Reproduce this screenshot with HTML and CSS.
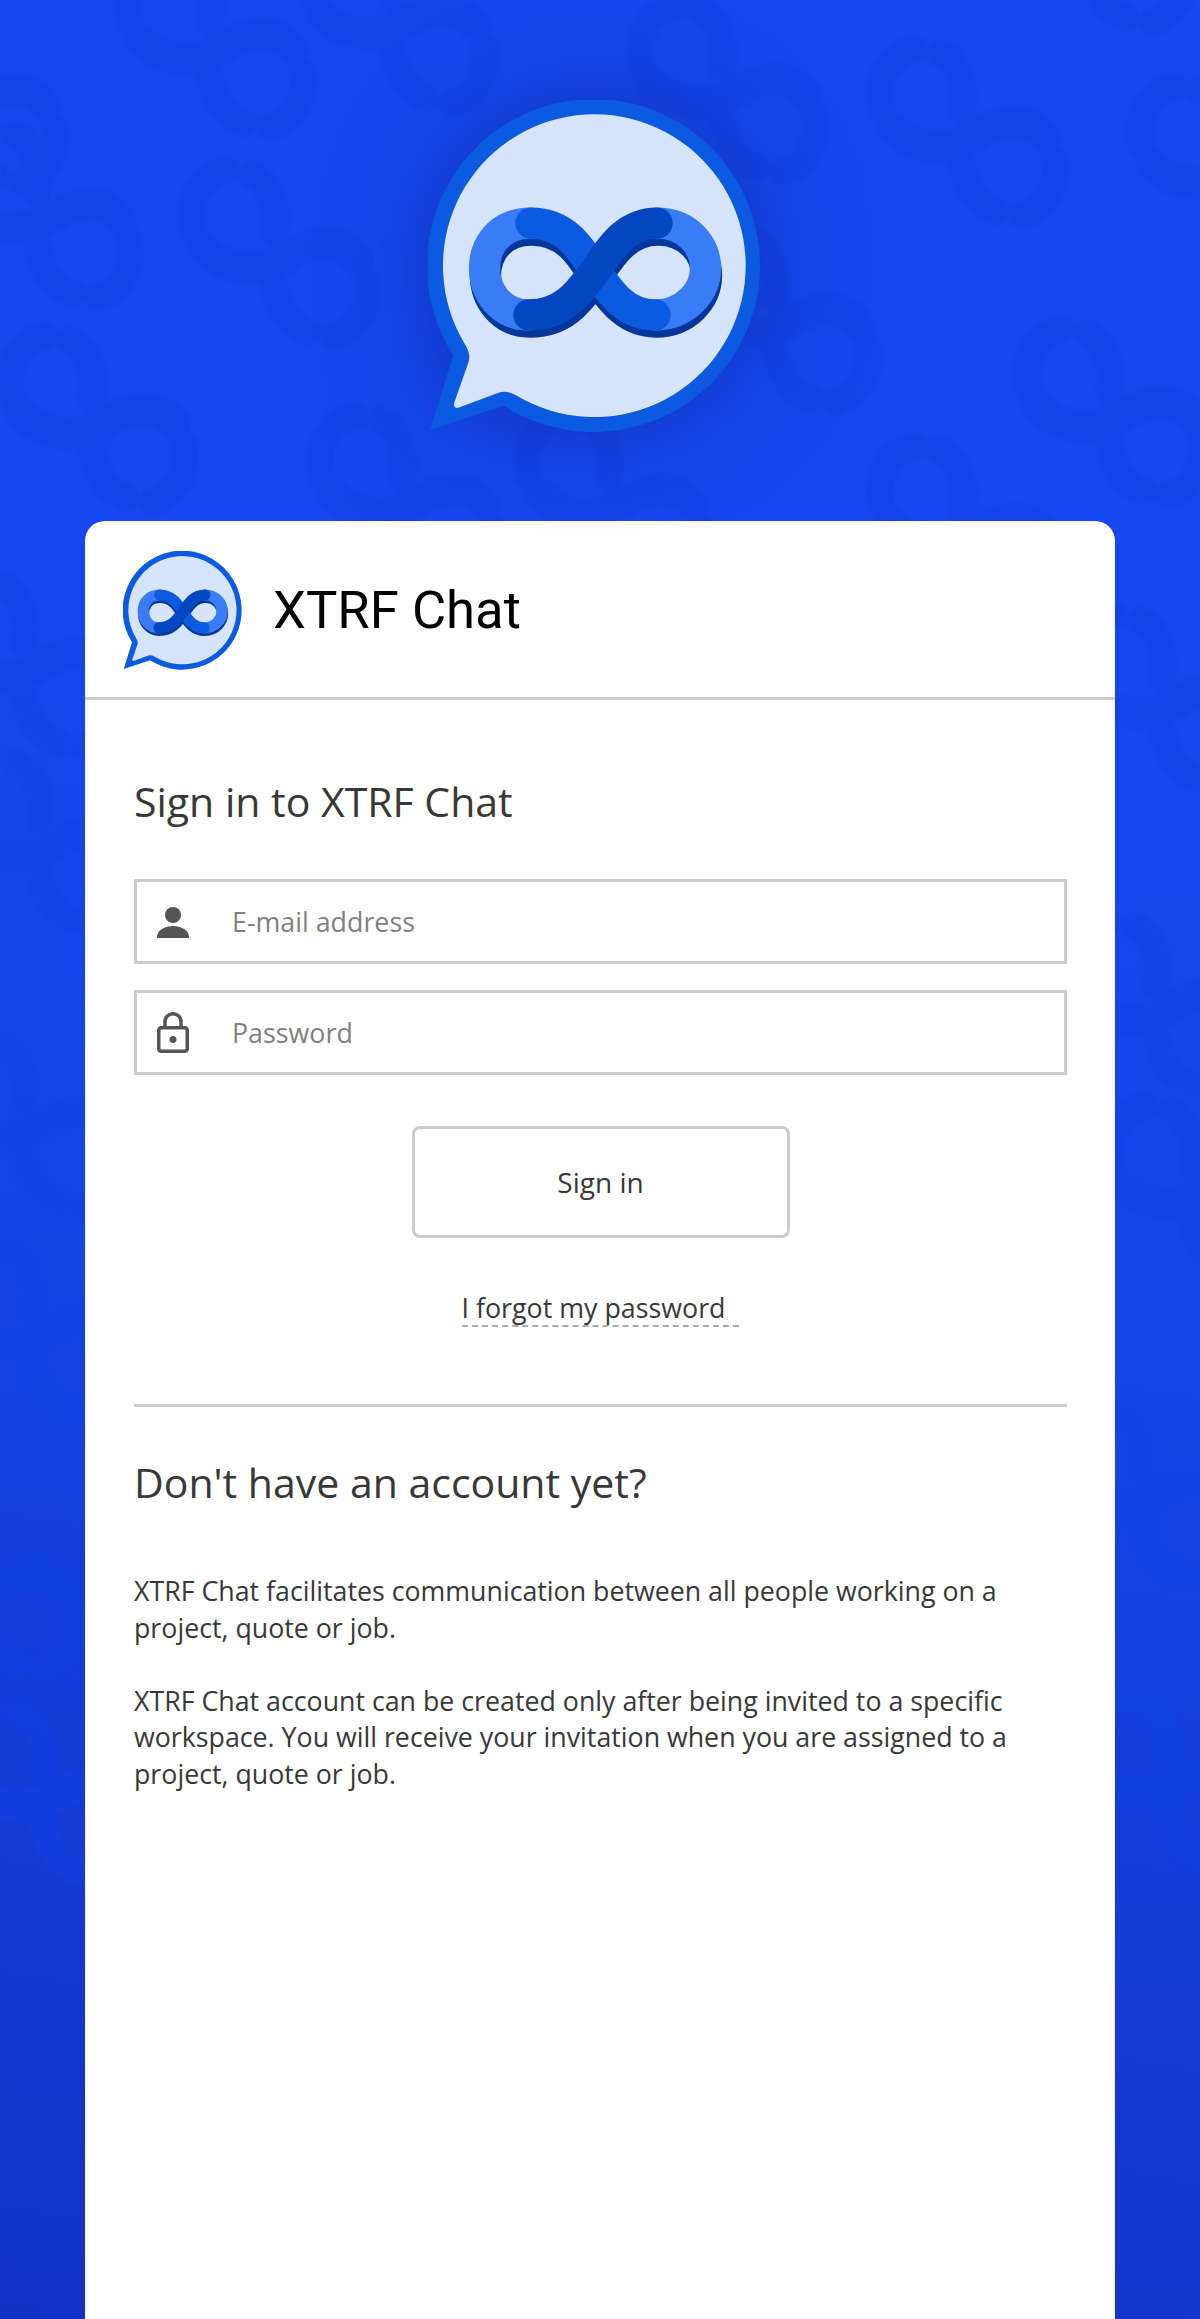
FILE: index.html
```html
<!DOCTYPE html>
<html lang="en">
<head>
    <meta charset="UTF-8">
    <meta name="viewport" content="width=device-width, initial-scale=1.0">
    <title>XTRF Chat</title>
    <link rel="stylesheet" href="styles.css">
</head>
<body>
<svg class="bg-pattern" viewBox="0 0 1200 2319" aria-hidden="true">
    <defs>
        <g id="bgMark" fill="none" stroke-linecap="round" stroke-width="27">
            <path d="M-78 -24 C-86 -50 -72 -78 -46 -84"/>
            <path d="M-20 -80 C-2 -70 8 -45 2 -22"/>
            <path d="M-68 -6 C-45 20 -5 17 20 0 C45 -15 70 -16 85 5" stroke-width="32"/>
            <path d="M2 32 C8 58 20 72 36 78"/>
            <path d="M62 82 C84 78 100 52 94 26"/>
        </g>
    </defs>
    <g stroke="#1241e4">
        <use href="#bgMark" x="208" y="45"/>
        <use href="#bgMark" x="35" y="215"/>
        <use href="#bgMark" x="272" y="254"/>
        <use href="#bgMark" x="90" y="420"/>
        <use href="#bgMark" x="400" y="500"/>
        <use href="#bgMark" x="607" y="500"/>
        <use href="#bgMark" x="390" y="20"/>
        <use href="#bgMark" x="720" y="90"/>
        <use href="#bgMark" x="-40" y="100"/>
        <use href="#bgMark" x="960" y="133"/>
        <use href="#bgMark" x="773" y="320"/>
        <use href="#bgMark" x="1107" y="413"/>
        <use href="#bgMark" x="1220" y="170"/>
        <use href="#bgMark" x="1090" y="-60"/>
        <use href="#bgMark" x="960" y="530"/>
        <use href="#bgMark" x="22" y="665"/>
        <use href="#bgMark" x="37" y="843"/>
        <use href="#bgMark" x="22" y="1124"/>
        <use href="#bgMark" x="30" y="1330"/>
        <use href="#bgMark" x="-20" y="1586"/>
        <use href="#bgMark" x="41" y="1793"/>
        <use href="#bgMark" x="1160" y="700"/>
        <use href="#bgMark" x="1154" y="1006"/>
        <use href="#bgMark" x="1190" y="1190"/>
        <use href="#bgMark" x="1140" y="1494"/>
        <use href="#bgMark" x="1166" y="1781"/>
    </g>
</svg>

<div class="page">
    <div class="hero">
        <svg class="logo logo-big" viewBox="0 0 330 330" aria-hidden="true">
            <defs>
                <g id="chatLogo">
                    <path fill="#0c5ae0" d="M2 327 L25 253 A165 165 0 1 1 75 303 Z"/>
                    <path fill="#d6e4fb" d="M36 241 Q44 253 39 263 L26 300 Q25 306 30 305 L70 290 Q78 287 88 293 A150 150 0 1 0 36 241 Z"/>
                    <g fill="none" stroke-width="31" stroke-linecap="round">
                        <path stroke="#03389a" transform="translate(1 7)" d="M165 170 C150 190 135 213 100 213 C72 213 56 190 56 167 C56 145 70 122 102 122 C135 122 150 145 165 170 C180 190 195 213 225 213 C255 213 275 190 275 167 C275 145 258 122 227 122 C195 122 180 148 165 170 Z"/>
                        <path stroke="#3a7cf5" d="M102 122 C70 122 56 145 56 167 C56 190 72 213 100 213"/>
                        <path stroke="#3a7cf5" d="M227 122 C258 122 275 145 275 167 C275 190 255 213 225 213"/>
                        <path stroke="#0c5ae0" d="M102 122 C135 122 150 145 165 168 C180 190 195 213 225 213"/>
                        <path stroke="#0547c0" d="M100 213 C135 213 150 190 165 170 C180 148 195 122 227 122"/>
                    </g>
                </g>
            </defs>
            <use href="#chatLogo"/>
        </svg>
    </div>

    <div class="card">
        <div class="card-header">
            <svg class="logo logo-small" viewBox="0 0 330 330" aria-hidden="true"><use href="#chatLogo"/></svg>
            <span class="app-name">XTRF Chat</span>
        </div>

        <div class="card-body">
            <h2 class="signin-title">Sign in to XTRF Chat</h2>

            <div class="field">
                <svg class="field-icon" viewBox="0 0 32 41" aria-hidden="true">
                    <circle cx="16" cy="14" r="8"/>
                    <path d="M0 36 C0 29 8 25 16 25 C24 25 32 29 32 36 V37 H0 Z"/>
                </svg>
                <input type="text" placeholder="E-mail address">
            </div>
            <div class="field">
                <svg class="field-icon" viewBox="0 0 32 41" aria-hidden="true">
                    <rect x="1.75" y="15.75" width="28.5" height="23.5" rx="2.5" fill="none" stroke="#555" stroke-width="3.5"/>
                    <path d="M8 15 V9.5 A8 7.75 0 0 1 24 9.5 V15" fill="none" stroke="#555" stroke-width="3.5"/>
                    <circle cx="16" cy="27.5" r="3.5"/>
                </svg>
                <input type="password" placeholder="Password">
            </div>

            <div class="actions">
                <button type="button">Sign in</button>
                <a class="forgot" href="#">I forgot my password</a>
            </div>

            <div class="register">
                <h2 class="register-title">Don't have an account yet?</h2>
                <p>XTRF Chat facilitates communication between all people working on a project, quote or job.</p>
                <p>XTRF Chat account can be created only after being invited to a specific workspace. You will receive your invitation when you are assigned to a project, quote or job.</p>
            </div>
        </div>
    </div>
</div>
</body>
</html>
```

FILE: styles.css
```css
* {
    box-sizing: border-box;
    margin: 0;
    padding: 0;
}

html, body {
    height: 2319px;
    overflow: hidden;
}

body {
    position: relative;
    font-family: "Open Sans", sans-serif;
    color: #383838;
    background: linear-gradient(190deg, #1747ee 0%, #1747ee 35%, #1541e0 65%, #1232c6 100%);
}

.bg-pattern {
    position: absolute;
    top: 0;
    left: 0;
    width: 1200px;
    height: 2319px;
    opacity: 0.55;
    filter: blur(1.5px);
}

.page {
    position: relative;
    height: 100%;
    display: flex;
    flex-direction: column;
}

.hero {
    height: 521px;
    padding: 100px 0 0 428px;
}

.logo {
    display: block;
}

.logo-big {
    width: 333px;
    height: 333px;
    filter: drop-shadow(0 0 50px rgba(12, 36, 150, 0.6));
}

.logo-small {
    width: 119px;
    height: 119px;
}

.card {
    flex: 1;
    margin: 0 85px;
    background: white;
    border-radius: 20px 20px 0 0;
}

.card-header {
    height: 179px;
    display: flex;
    align-items: center;
    gap: 31px;
    padding: 2px 0 0 38px;
    border-bottom: 3px solid #ccc;
}

.app-name {
    font-family: Roboto, sans-serif;
    font-size: 52.6px;
    color: #000;
}

.card-body {
    padding: 0 48px 0 49px;
}

.signin-title, .register-title {
    font-size: 41px;
    font-weight: 400;
    line-height: 54px;
    color: #383838;
}

.signin-title {
    margin: 74px 0 51px;
}

.field {
    height: 85px;
    display: flex;
    align-items: center;
    gap: 43px;
    padding-left: 20px;
    margin-bottom: 26px;
    border: 3px solid #ccc;
}

.field-icon {
    width: 32px;
    height: 41px;
    flex: none;
    fill: #555;
}

.field input {
    flex: 1;
    border: none;
    outline: none;
    font-family: inherit;
    font-size: 26.8px;
    color: #383838;
}

.field input::placeholder {
    color: #808080;
    opacity: 1;
}

.actions {
    display: flex;
    flex-direction: column;
    align-items: center;
    padding-top: 25px;
    padding-bottom: 77px;
    border-bottom: 3px solid #ccc;
}

button {
    width: 378px;
    height: 112px;
    border: 3px solid #ccc;
    border-radius: 8px;
    background-color: white;
    font-family: inherit;
    font-size: 28px;
    color: #383838;
    cursor: pointer;
}

.forgot {
    margin-top: 52px;
    padding-right: 14px;
    font-size: 26.8px;
    line-height: 35px;
    color: #383838;
    text-decoration: none;
    border-bottom: 2px dashed #aaa;
}

.register-title {
    margin-top: 48px;
    margin-bottom: 64px;
}

.register p {
    font-size: 26.75px;
    line-height: 36.6px;
    margin-bottom: 36.6px;
    color: #383838;
}
```
